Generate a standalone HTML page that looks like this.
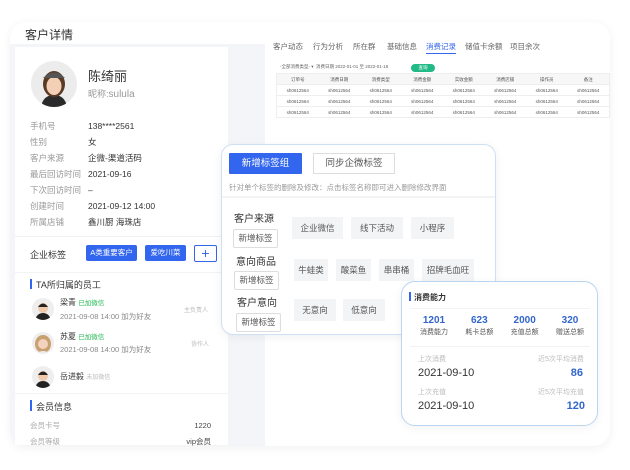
<!DOCTYPE html>
<html><head><meta charset="utf-8"><style>
*{box-sizing:border-box;margin:0;padding:0}
body{width:630px;height:470px;background:#fff;font-family:"Liberation Sans","Noto Sans CJK SC",sans-serif;position:relative;overflow:hidden;color:#333}
.abs{position:absolute}
.outer{left:10px;top:22px;width:600px;height:424px;background:#f3f5f9;border-radius:16px;box-shadow:0 2px 10px rgba(0,0,0,.06)}
.hdr{left:10px;top:22px;width:600px;height:22px;background:#fff;border-radius:16px 16px 0 0}
.left{left:15px;top:47px;width:213px;height:398px;background:#fff}
.right{left:265px;top:30px;width:345px;height:416px;background:#fff;border-radius:0 16px 16px 0}
.lbl{font-size:8.5px;color:#999}
.val{font-size:8.5px;color:#333}
.tab{font-size:7.5px;color:#666;top:41px}
.tag{background:#f3f4f6;font-size:8.5px;color:#555;text-align:center;line-height:22px;height:22px}
.btn2{border:1px solid #ddd;font-size:8.5px;color:#555;text-align:center;line-height:17px;height:19px;background:#fff;border-radius:2px}
.av{border-radius:50%;background:#eee;overflow:hidden}
.row{display:grid;grid-template-columns:repeat(8,1fr);height:11px;line-height:11px;font-size:4.5px;color:#555;text-align:center;border-bottom:1px solid #eee;overflow:hidden;white-space:nowrap}
</style></head><body>
<div class="abs outer"></div>
<div class="abs hdr"></div>
<div class="abs" style="left:25px;top:26px;font-size:12px;color:#333">客户详情</div>
<div class="abs left"></div>
<div class="abs right"></div>

<div class="abs av" style="left:31px;top:61px;width:46px;height:46px;background:#ececec">
<svg width="46" height="46"><path d="M10 46 Q12 34 23 34 Q34 34 36 46Z" fill="#2a2a2a"/><ellipse cx="23" cy="23" rx="11" ry="13" fill="#5a3a25"/><ellipse cx="23" cy="25" rx="7.5" ry="9" fill="#f3cfb6"/><path d="M12 17 Q23 6 34 17 Z" fill="#555"/></svg></div>
<div class="abs" style="left:88px;top:66px;font-size:13px;color:#333">陈绮丽</div>
<div class="abs" style="left:88px;top:87px;font-size:9px;color:#999">昵称:<span style="font-size:10px">sulula</span></div>

<div class="abs lbl" style="left:30px;top:118px;line-height:16px">手机号<br>性别<br>客户来源<br>最后回访时间<br>下次回访时间<br>创建时间<br>所属店铺</div>
<div class="abs val" style="left:88px;top:118px;line-height:16px">138****2561<br>女<br>企微-渠道活码<br>2021-09-16<br>–<br>2021-09-12 14:00<br>鑫川厨 海珠店</div>

<div class="abs" style="left:15px;top:236px;width:213px;height:1px;background:#f0f0f0"></div>
<div class="abs" style="left:30px;top:248px;font-size:9px;color:#333">企业标签</div>
<div class="abs" style="left:86px;top:245px;width:51px;height:16px;background:#3366ee;color:#fff;font-size:7.5px;text-align:center;line-height:16px;border-radius:2px">A类重要客户</div>
<div class="abs" style="left:145px;top:245px;width:41px;height:16px;background:#3366ee;color:#fff;font-size:7.5px;text-align:center;line-height:16px;border-radius:2px">爱吃川菜</div>
<div class="abs" style="left:194px;top:245px;width:23px;height:17px;border:1px solid #3366ee;color:#3366ee;font-size:14px;text-align:center;line-height:14px;border-radius:2px">+</div>
<div class="abs" style="left:15px;top:272px;width:213px;height:1px;background:#f3f3f3"></div>
<div class="abs" style="left:30px;top:279px;width:2px;height:10px;background:#3366ee"></div>
<div class="abs" style="left:36px;top:278px;font-size:9px;color:#333">TA所归属的员工</div>

<div class="abs av" style="left:32px;top:298px;width:22px;height:22px"><svg width="22" height="22"><path d="M3 22 Q5 15 11 15 Q17 15 19 22Z" fill="#222"/><circle cx="11" cy="10" r="5" fill="#f0c8aa"/><path d="M6 9 Q11 2 16 9Z" fill="#222"/></svg></div>
<div class="abs" style="left:60px;top:297px;font-size:8px;color:#333">梁青 <span style="color:#22bb55;font-size:6.5px">已加微信</span></div>
<div class="abs" style="left:60px;top:311px;font-size:7.5px;color:#888">2021-09-08 14:00 加为好友</div>
<div class="abs" style="left:184px;top:305px;font-size:6px;color:#bbb">主负责人</div>

<div class="abs av" style="left:32px;top:332px;width:22px;height:22px"><svg width="22" height="22"><ellipse cx="11" cy="12" rx="8" ry="9" fill="#c9a070"/><circle cx="11" cy="12" r="5" fill="#f3d3bd"/><path d="M3 22 Q11 16 19 22Z" fill="#eee"/></svg></div>
<div class="abs" style="left:60px;top:331px;font-size:8px;color:#333">苏夏 <span style="color:#22bb55;font-size:6.5px">已加微信</span></div>
<div class="abs" style="left:60px;top:344px;font-size:7.5px;color:#888">2021-09-08 14:00 加为好友</div>
<div class="abs" style="left:191px;top:339px;font-size:6px;color:#bbb">协作人</div>

<div class="abs av" style="left:32px;top:366px;width:22px;height:22px"><svg width="22" height="22"><path d="M3 22 Q5 15 11 15 Q17 15 19 22Z" fill="#222"/><circle cx="11" cy="10" r="5" fill="#f0c8aa"/><path d="M6 9 Q11 2 16 9Z" fill="#222"/></svg></div>
<div class="abs" style="left:60px;top:371px;font-size:8px;color:#333">岳进毅 <span style="color:#bbb;font-size:6px">未加微信</span></div>

<div class="abs" style="left:15px;top:393px;width:213px;height:1px;background:#f3f3f3"></div>
<div class="abs" style="left:30px;top:400px;width:2px;height:11px;background:#3366ee"></div>
<div class="abs" style="left:36px;top:400px;font-size:9px;color:#333">会员信息</div>
<div class="abs" style="left:30px;top:418px;font-size:7.5px;color:#aaa;line-height:16px">会员卡号<br>会员等级</div>
<div class="abs" style="left:150px;top:418px;width:61px;text-align:right;font-size:7.5px;color:#444;line-height:16px">1220<br>vip会员</div>

<div class="abs tab" style="left:273px">客户动态</div>
<div class="abs tab" style="left:313px">行为分析</div>
<div class="abs tab" style="left:353px">所在群</div>
<div class="abs tab" style="left:387px">基础信息</div>
<div class="abs tab" style="left:426px;color:#3366ee">消费记录</div>
<div class="abs" style="left:426px;top:53px;width:30px;height:1px;background:#3366ee"></div>
<div class="abs tab" style="left:465px">储值卡余额</div>
<div class="abs tab" style="left:510px">项目余次</div>
<div class="abs" style="left:280px;top:64px;font-size:4.5px;color:#666">-全部消费类型- ▾ &nbsp;消费日期 2022-01-01 至 2022-01-18</div>
<div class="abs" style="left:411px;top:64px;width:24px;height:8px;background:#22bb88;border-radius:4px;font-size:4.5px;color:#fff;text-align:center;line-height:8px">查询</div>
<div class="abs" style="left:276px;top:73px;width:334px;border:1px solid #eee;border-bottom:none">
<div class="row" style="background:#f7f7f7"><span>订单号</span><span>消费日期</span><span>消费类型</span><span>消费金额</span><span>实收金额</span><span>消费店铺</span><span>操作员</span><span>备注</span></div>
<div class="row"><span>sh0612564</span><span>sh0612564</span><span>sh0612564</span><span>sh0612564</span><span>sh0612564</span><span>sh0612564</span><span>sh0612564</span><span>sh0612564</span></div>
<div class="row"><span>sh0612564</span><span>sh0612564</span><span>sh0612564</span><span>sh0612564</span><span>sh0612564</span><span>sh0612564</span><span>sh0612564</span><span>sh0612564</span></div>
<div class="row"><span>sh0612564</span><span>sh0612564</span><span>sh0612564</span><span>sh0612564</span><span>sh0612564</span><span>sh0612564</span><span>sh0612564</span><span>sh0612564</span></div>
</div>

<div class="abs" style="left:221px;top:144px;width:275px;height:191px;background:#fff;border:1px solid #cfe0f4;border-radius:12px;box-shadow:0 2px 10px rgba(0,0,0,.06)"></div>
<div class="abs" style="left:229px;top:153px;width:73px;height:21px;background:#3366ee;color:#fff;font-size:9.5px;text-align:center;line-height:21px;border-radius:1px">新增标签组</div>
<div class="abs" style="left:313px;top:153px;width:82px;height:21px;border:1px solid #ddd;color:#555;font-size:9.5px;text-align:center;line-height:19px">同步企微标签</div>
<div class="abs" style="left:229px;top:182px;font-size:7.5px;color:#999">针对单个标签的删除及修改：点击标签名称即可进入删除修改界面</div>
<div class="abs" style="left:222px;top:196px;width:273px;height:2px;background:#f3f3f3"></div>
<div class="abs" style="left:234px;top:210px;font-size:10px;color:#333">客户来源</div>
<div class="abs btn2" style="left:233px;top:229px;width:45px">新增标签</div>
<div class="abs" style="left:236px;top:253px;font-size:10px;color:#333">意向商品</div>
<div class="abs btn2" style="left:234px;top:271px;width:45px">新增标签</div>
<div class="abs" style="left:237px;top:294px;font-size:10px;color:#333">客户意向</div>
<div class="abs btn2" style="left:236px;top:313px;width:45px">新增标签</div>
<div class="abs tag" style="left:292px;top:217px;width:51px">企业微信</div>
<div class="abs tag" style="left:351px;top:217px;width:52px">线下活动</div>
<div class="abs tag" style="left:411px;top:217px;width:43px">小程序</div>
<div class="abs tag" style="left:294px;top:259px;width:34px">牛蛙类</div>
<div class="abs tag" style="left:336px;top:259px;width:35px">酸菜鱼</div>
<div class="abs tag" style="left:379px;top:259px;width:35px">串串桶</div>
<div class="abs tag" style="left:422px;top:259px;width:52px">招牌毛血旺</div>
<div class="abs tag" style="left:294px;top:299px;width:42px">无意向</div>
<div class="abs tag" style="left:343px;top:299px;width:42px">低意向</div>

<div class="abs" style="left:401px;top:281px;width:197px;height:145px;background:#fff;border:1px solid #b9d5f0;border-radius:14px;box-shadow:0 2px 10px rgba(0,0,0,.05)"></div>
<div class="abs" style="left:409px;top:292px;width:2px;height:9px;background:#3366ee"></div>
<div class="abs" style="left:414px;top:292px;font-size:8px;color:#333;font-weight:bold">消费能力</div>
<div class="abs" style="left:410px;top:308px;width:180px;height:1px;background:#f3f3f3"></div>
<div class="abs" style="left:412px;top:315px;width:180px;font-size:10px;color:#3366cc;font-weight:bold;display:flex;justify-content:space-between;text-align:center">
<div style="width:44px">1201<div style="font-size:7px;color:#555;font-weight:normal;margin-top:1px">消费能力</div></div>
<div style="width:44px">623<div style="font-size:7px;color:#555;font-weight:normal;margin-top:1px">耗卡总额</div></div>
<div style="width:44px">2000<div style="font-size:7px;color:#555;font-weight:normal;margin-top:1px">充值总额</div></div>
<div style="width:44px">320<div style="font-size:7px;color:#555;font-weight:normal;margin-top:1px">赠送总额</div></div></div>
<div class="abs" style="left:410px;top:346px;width:180px;height:1px;background:#f3f3f3"></div>
<div class="abs" style="left:418px;top:354px;font-size:7px;color:#bbb">上次消费</div>
<div class="abs" style="left:538px;top:354px;font-size:7px;color:#bbb">近5次平均消费</div>
<div class="abs" style="left:418px;top:367px;font-size:11px;color:#333">2021-09-10</div>
<div class="abs" style="left:560px;top:367px;width:23px;text-align:right;font-size:11px;color:#3366cc;font-weight:bold">86</div>
<div class="abs" style="left:418px;top:387px;font-size:7px;color:#bbb">上次充值</div>
<div class="abs" style="left:538px;top:387px;font-size:7px;color:#bbb">近5次平均充值</div>
<div class="abs" style="left:418px;top:400px;font-size:11px;color:#333">2021-09-10</div>
<div class="abs" style="left:560px;top:400px;width:25px;text-align:right;font-size:11px;color:#3366cc;font-weight:bold">120</div>
</body></html>
